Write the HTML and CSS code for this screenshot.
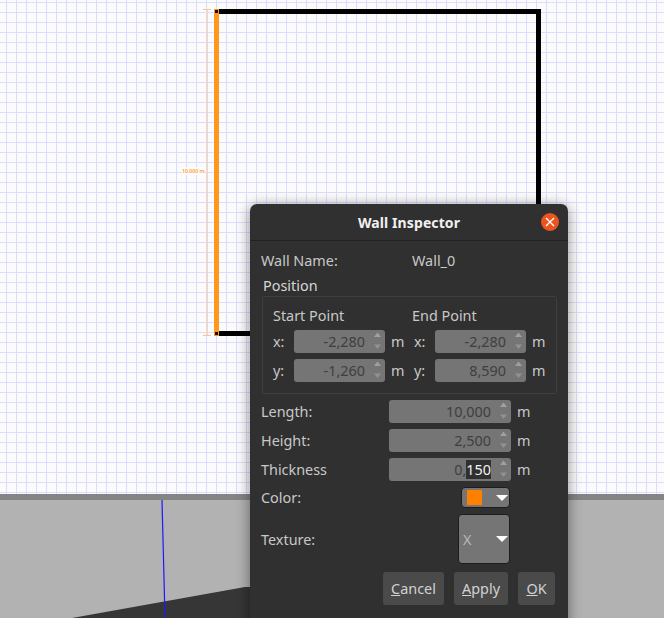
FILE: index.html
```html
<!DOCTYPE html>
<html lang="en">
<head>
<meta charset="utf-8">
<title>Wall Inspector</title>
<link rel="stylesheet" href="styles.css">
</head>
<body>
<div class="app">
  <div class="plan">
    <div class="wall wall-top"></div>
    <div class="wall wall-right"></div>
    <div class="wall wall-bottom"></div>
    <div class="wall wall-selected"></div>
    <div class="node node-top"></div>
    <div class="node node-bottom"></div>
    <div class="dim-line"></div>
    <div class="dim-tick dim-tick-top"></div>
    <div class="dim-tick dim-tick-bottom"></div>
    <div class="dim-label">10.000 m</div>
  </div>
  <div class="divider"></div>
  <div class="view">
    <svg class="view-art" width="664" height="118" viewBox="0 0 664 118">
      <polygon points="72,118 245,87 260,87 260,118" fill="#363636"/>
      <line x1="162" y1="0" x2="165" y2="118" stroke="#1a1aff" stroke-width="1.2"/>
    </svg>
  </div>

  <section class="dialog">
    <header class="titlebar">
      <h1 class="title">Wall Inspector</h1>
      <span class="close">
        <svg width="10" height="10" viewBox="0 0 10 10"><path d="M1 1 9 9M9 1 1 9" stroke="#fff" stroke-width="1.3" fill="none"/></svg>
      </span>
    </header>
    <div class="content">
      <div class="name-row">
        <span class="name-label">Wall Name:</span>
        <span>Wall_0</span>
      </div>
      <div class="group-title">Position</div>
      <div class="group">
        <div class="point">
          <div class="point-title">Start Point</div>
          <div class="coord"><span class="axis">x:</span><span class="spin spin-small"><span class="spin-value">-2,280</span><span class="arrows"><svg width="9" height="23" viewBox="0 0 9 23"><path d="M1 7 4.5 2.5 8 7Z" fill="#a0a0a0"/><path d="M1 14.5H8L4.5 19Z" fill="#929292"/></svg></span></span><span class="unit">m</span></div>
          <div class="coord"><span class="axis">y:</span><span class="spin spin-small"><span class="spin-value">-1,260</span><span class="arrows"><svg width="9" height="23" viewBox="0 0 9 23"><path d="M1 7 4.5 2.5 8 7Z" fill="#a0a0a0"/><path d="M1 14.5H8L4.5 19Z" fill="#929292"/></svg></span></span><span class="unit">m</span></div>
        </div>
        <div class="point">
          <div class="point-title point-title-end">End Point</div>
          <div class="coord"><span class="axis">x:</span><span class="spin spin-small"><span class="spin-value">-2,280</span><span class="arrows"><svg width="9" height="23" viewBox="0 0 9 23"><path d="M1 7 4.5 2.5 8 7Z" fill="#a0a0a0"/><path d="M1 14.5H8L4.5 19Z" fill="#929292"/></svg></span></span><span class="unit">m</span></div>
          <div class="coord"><span class="axis">y:</span><span class="spin spin-small"><span class="spin-value">8,590</span><span class="arrows"><svg width="9" height="23" viewBox="0 0 9 23"><path d="M1 7 4.5 2.5 8 7Z" fill="#a0a0a0"/><path d="M1 14.5H8L4.5 19Z" fill="#929292"/></svg></span></span><span class="unit">m</span></div>
        </div>
      </div>
      <div class="props">
        <span class="prop-label">Length:</span><span class="spin spin-wide"><span class="spin-value">10,000</span><span class="arrows"><svg width="9" height="23" viewBox="0 0 9 23"><path d="M1 7 4.5 2.5 8 7Z" fill="#a0a0a0"/><path d="M1 14.5H8L4.5 19Z" fill="#929292"/></svg></span></span><span class="unit">m</span>
        <span class="prop-label">Height:</span><span class="spin spin-wide"><span class="spin-value">2,500</span><span class="arrows"><svg width="9" height="23" viewBox="0 0 9 23"><path d="M1 7 4.5 2.5 8 7Z" fill="#a0a0a0"/><path d="M1 14.5H8L4.5 19Z" fill="#929292"/></svg></span></span><span class="unit">m</span>
        <span class="prop-label">Thickness</span><span class="spin spin-wide"><span class="spin-value">0,<span class="selected">150</span></span><span class="arrows"><svg width="9" height="23" viewBox="0 0 9 23"><path d="M1 7 4.5 2.5 8 7Z" fill="#a0a0a0"/><path d="M1 14.5H8L4.5 19Z" fill="#929292"/></svg></span></span><span class="unit">m</span>
      </div>
      <div class="color-row">
        <span>Color:</span>
        <span class="combo combo-color"><span class="swatch"></span><span class="combo-arrow"></span></span>
      </div>
      <div class="texture-row">
        <span>Texture:</span>
        <span class="combo combo-texture"><span class="combo-text">X</span><span class="combo-arrow"></span></span>
      </div>
      <div class="actions">
        <button class="btn btn-cancel"><u>C</u>ancel</button>
        <button class="btn btn-apply"><u>A</u>pply</button>
        <button class="btn btn-ok"><u>O</u>K</button>
      </div>
    </div>
  </section>
</div>
</body>
</html>
```
FILE: styles.css
```css
* { box-sizing: border-box; }
html, body { margin: 0; height: 100%; }
body { font-family: "Noto Sans", "Open Sans", sans-serif; font-size: 14.4px; overflow: hidden; }

.app {
  position: relative;
  width: 664px;
  height: 618px;
  display: flex;
  flex-direction: column;
  overflow: hidden;
}

/* floor plan canvas */
.plan {
  position: relative;
  height: 494px;
  flex: none;
  background-color: #fbfbfb;
  background-image:
    linear-gradient(to right, #dcdcff 1px, transparent 1px),
    linear-gradient(to bottom, #dcdcff 1px, transparent 1px);
  background-size: 10px 10px;
  background-position: 6px 2px;
}
.wall { position: absolute; background: #000; }
.wall-top { left: 214px; top: 9px; width: 327px; height: 5px; }
.wall-right { left: 536px; top: 9px; width: 5px; height: 327px; }
.wall-bottom { left: 214px; top: 331px; width: 327px; height: 5px; }
.wall-selected { left: 214px; top: 9px; width: 5px; height: 327px; background: #ff981f; }
.node { position: absolute; width: 3px; height: 3px; background: #111; left: 215px; }
.node-top { top: 10px; }
.node-bottom { top: 332px; }
.dim-line { position: absolute; left: 207px; top: 9px; width: 1px; height: 327px; background: #fbd5a8; }
.dim-tick { position: absolute; left: 203px; width: 8px; height: 1px; background: #fbc48a; }
.dim-tick-top { top: 9px; }
.dim-tick-bottom { top: 335px; }
.dim-label {
  position: absolute;
  left: 182px;
  top: 167px;
  width: 22px;
  height: 8px;
  background: #fdfdfd;
  color: #ffa030;
  font-size: 5.2px;
  font-weight: 600;
  line-height: 8px;
  white-space: nowrap;
  text-align: center;
}

.divider { height: 6px; flex: none; background: #848484; }
.view { flex: 1; background: #b2b2b2; min-height: 0; }
.view-art { display: block; }

/* dialog window */
.dialog {
  position: absolute;
  left: 250px;
  top: 204px;
  width: 318px;
  height: 430px;
  background: #303030;
  border-radius: 7px 7px 0 0;
  color: #c8c8c8;
  box-shadow: 0 2px 14px rgba(0, 0, 0, 0.45);
}
.titlebar {
  position: relative;
  height: 37px;
  display: flex;
  align-items: center;
  justify-content: center;
  border-bottom: 1px solid #232323;
}
.title { margin: 0; font-size: 14px; font-weight: 700; color: #f0f0f0; letter-spacing: 0.1px; }
.close {
  position: absolute;
  right: 9px;
  top: 9px;
  width: 18px;
  height: 18px;
  border-radius: 50%;
  background: #e95420;
  display: flex;
  align-items: center;
  justify-content: center;
}

.content { padding: 10px 12px 0 11px; display: flex; flex-direction: column; }
.name-row { display: flex; height: 19px; align-items: center; }
.name-label { width: 151px; }
.group-title { margin: 6px 0 0 2px; height: 19px; line-height: 19px; color: #d6d6d6; }
.group {
  margin: 1px 0 0 1px;
  width: 295px;
  height: 98px;
  border: 1px solid #3e3e3e;
  border-radius: 2px;
  padding: 9px 10px 0;
  display: flex;
  gap: 8px;
}
.point { width: 133px; flex: none; }
.point-title { height: 19px; line-height: 19px; margin-bottom: 5px; }
.point-title-end { margin-left: -2px; }
.coord { display: flex; align-items: center; height: 23px; margin-bottom: 6px; }
.axis { width: 21px; flex: none; }
.unit { margin-left: 6px; flex: none; }

.spin {
  display: flex;
  flex: none;
  align-items: center;
  justify-content: flex-end;
  height: 23px;
  background: #757575;
  border-radius: 3px;
  color: #3f3f3f;
  padding-right: 3px;
}
.spin-small { width: 91px; }
.spin-wide { width: 122px; }
.spin-value { margin-right: 8px; }
.arrows { display: flex; width: 9px; height: 23px; }
.selected { background: #303030; color: #f2f2f2; }

.props {
  margin-top: 6px;
  display: grid;
  grid-template-columns: 128px 122px auto;
  row-gap: 6px;
  align-items: center;
}

.color-row { display: flex; align-items: center; justify-content: space-between; height: 21px; margin-top: 6px; padding-right: 46px; }
.texture-row { display: flex; align-items: center; justify-content: space-between; height: 50px; margin-top: 6px; padding-right: 46px; }
.combo {
  display: flex;
  align-items: center;
  background: #757575;
  border: 1px solid #1c1c1c;
  border-radius: 4px;
}
.combo-color { width: 49px; height: 21px; padding-left: 5px; }
.combo-texture { width: 52px; height: 50px; padding-left: 4px; }
.swatch { width: 15px; height: 15px; background: #ff7f00; }
.combo-text { color: #b8b8b8; }
.combo-arrow {
  margin-left: auto;
  margin-right: 1px;
  width: 0;
  height: 0;
  border-left: 6px solid transparent;
  border-right: 6px solid transparent;
  border-top: 6px solid #fff;
}

.actions { display: flex; justify-content: flex-end; gap: 10px; margin-top: 8px; padding-right: 1px; }
.btn {
  height: 33px;
  padding: 0;
  border: 0;
  border-radius: 3px;
  background: #4a4a4a;
  color: #d2d2d2;
  font: inherit;
}
.btn-cancel { width: 61px; }
.btn-apply { width: 54px; }
.btn-ok { width: 37px; }
```
